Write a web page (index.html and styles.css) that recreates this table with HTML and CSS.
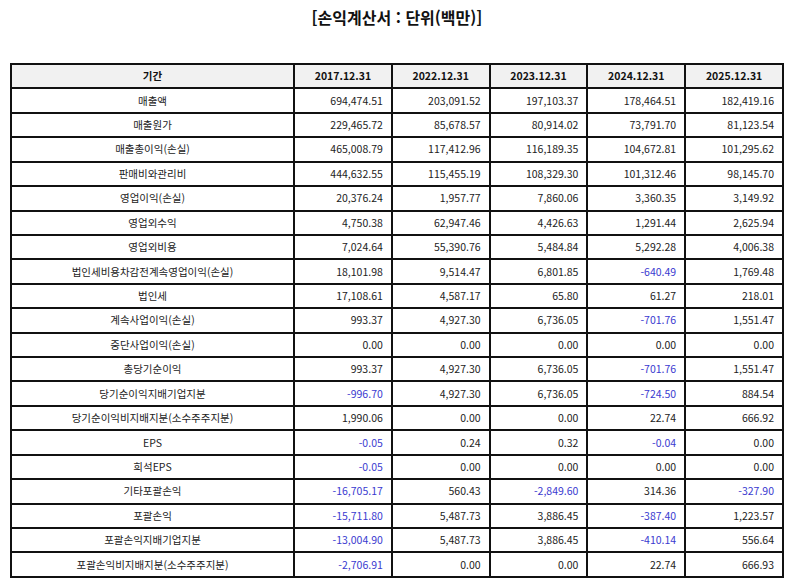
FILE: index.html
```html
<!DOCTYPE html>
<html lang="ko">
<head>
<meta charset="utf-8">
<link rel="stylesheet" href="styles.css">
</head>
<body>
<h1 class="title">[손익계산서 : 단위(백만)]</h1>
<table class="fin">
<thead>
<tr><th>기간</th><th>2017.12.31</th><th>2022.12.31</th><th>2023.12.31</th><th>2024.12.31</th><th>2025.12.31</th></tr>
</thead>
<tbody>
<tr><td>매출액</td><td>694,474.51</td><td>203,091.52</td><td>197,103.37</td><td>178,464.51</td><td>182,419.16</td></tr>
<tr><td>매출원가</td><td>229,465.72</td><td>85,678.57</td><td>80,914.02</td><td>73,791.70</td><td>81,123.54</td></tr>
<tr><td>매출총이익(손실)</td><td>465,008.79</td><td>117,412.96</td><td>116,189.35</td><td>104,672.81</td><td>101,295.62</td></tr>
<tr><td>판매비와관리비</td><td>444,632.55</td><td>115,455.19</td><td>108,329.30</td><td>101,312.46</td><td>98,145.70</td></tr>
<tr><td>영업이익(손실)</td><td>20,376.24</td><td>1,957.77</td><td>7,860.06</td><td>3,360.35</td><td>3,149.92</td></tr>
<tr><td>영업외수익</td><td>4,750.38</td><td>62,947.46</td><td>4,426.63</td><td>1,291.44</td><td>2,625.94</td></tr>
<tr><td>영업외비용</td><td>7,024.64</td><td>55,390.76</td><td>5,484.84</td><td>5,292.28</td><td>4,006.38</td></tr>
<tr><td>법인세비용차감전계속영업이익(손실)</td><td>18,101.98</td><td>9,514.47</td><td>6,801.85</td><td class="neg">-640.49</td><td>1,769.48</td></tr>
<tr><td>법인세</td><td>17,108.61</td><td>4,587.17</td><td>65.80</td><td>61.27</td><td>218.01</td></tr>
<tr><td>계속사업이익(손실)</td><td>993.37</td><td>4,927.30</td><td>6,736.05</td><td class="neg">-701.76</td><td>1,551.47</td></tr>
<tr><td>중단사업이익(손실)</td><td>0.00</td><td>0.00</td><td>0.00</td><td>0.00</td><td>0.00</td></tr>
<tr><td>총당기순이익</td><td>993.37</td><td>4,927.30</td><td>6,736.05</td><td class="neg">-701.76</td><td>1,551.47</td></tr>
<tr><td>당기순이익지배기업지분</td><td class="neg">-996.70</td><td>4,927.30</td><td>6,736.05</td><td class="neg">-724.50</td><td>884.54</td></tr>
<tr><td>당기순이익비지배지분(소수주주지분)</td><td>1,990.06</td><td>0.00</td><td>0.00</td><td>22.74</td><td>666.92</td></tr>
<tr><td>EPS</td><td class="neg">-0.05</td><td>0.24</td><td>0.32</td><td class="neg">-0.04</td><td>0.00</td></tr>
<tr><td>희석EPS</td><td class="neg">-0.05</td><td>0.00</td><td>0.00</td><td>0.00</td><td>0.00</td></tr>
<tr><td>기타포괄손익</td><td class="neg">-16,705.17</td><td>560.43</td><td class="neg">-2,849.60</td><td>314.36</td><td class="neg">-327.90</td></tr>
<tr><td>포괄손익</td><td class="neg">-15,711.80</td><td>5,487.73</td><td>3,886.45</td><td class="neg">-387.40</td><td>1,223.57</td></tr>
<tr><td>포괄손익지배기업지분</td><td class="neg">-13,004.90</td><td>5,487.73</td><td>3,886.45</td><td class="neg">-410.14</td><td>556.64</td></tr>
<tr><td>포괄손익비지배지분(소수주주지분)</td><td class="neg">-2,706.91</td><td>0.00</td><td>0.00</td><td>22.74</td><td>666.93</td></tr>
</tbody>
</table>
</body>
</html>
```
FILE: styles.css
```css
html, body {
  margin: 0;
  padding: 0;
  background: #fff;
}
body {
  padding: 0 10px;
  font-family: "Noto Sans CJK KR", "Noto Sans", sans-serif;
  color: #222;
}
.title {
  margin: 0;
  padding-top: 5px;
  height: 63px;
  box-sizing: border-box;
  text-align: center;
  font-size: 16px;
  line-height: 24px;
  font-weight: bold;
  color: #111;
}
.fin {
  width: 774px;
  border-collapse: collapse;
  table-layout: fixed;
  border: 2px solid #111;
  font-size: 10.5px;
}
.fin th, .fin td {
  border: 2px solid #111;
  height: 24.43px;
  padding: 0 8px;
  line-height: 14px;
  box-sizing: border-box;
}
.fin th {
  background: #f1f1f1;
  font-weight: bold;
  text-align: center;
  color: #111;
}
.fin th:first-child { width: 283px; }
.fin td { text-align: right; }
.fin td:first-child { text-align: center; }
.fin td.neg { color: #3a3ad0; }
```
